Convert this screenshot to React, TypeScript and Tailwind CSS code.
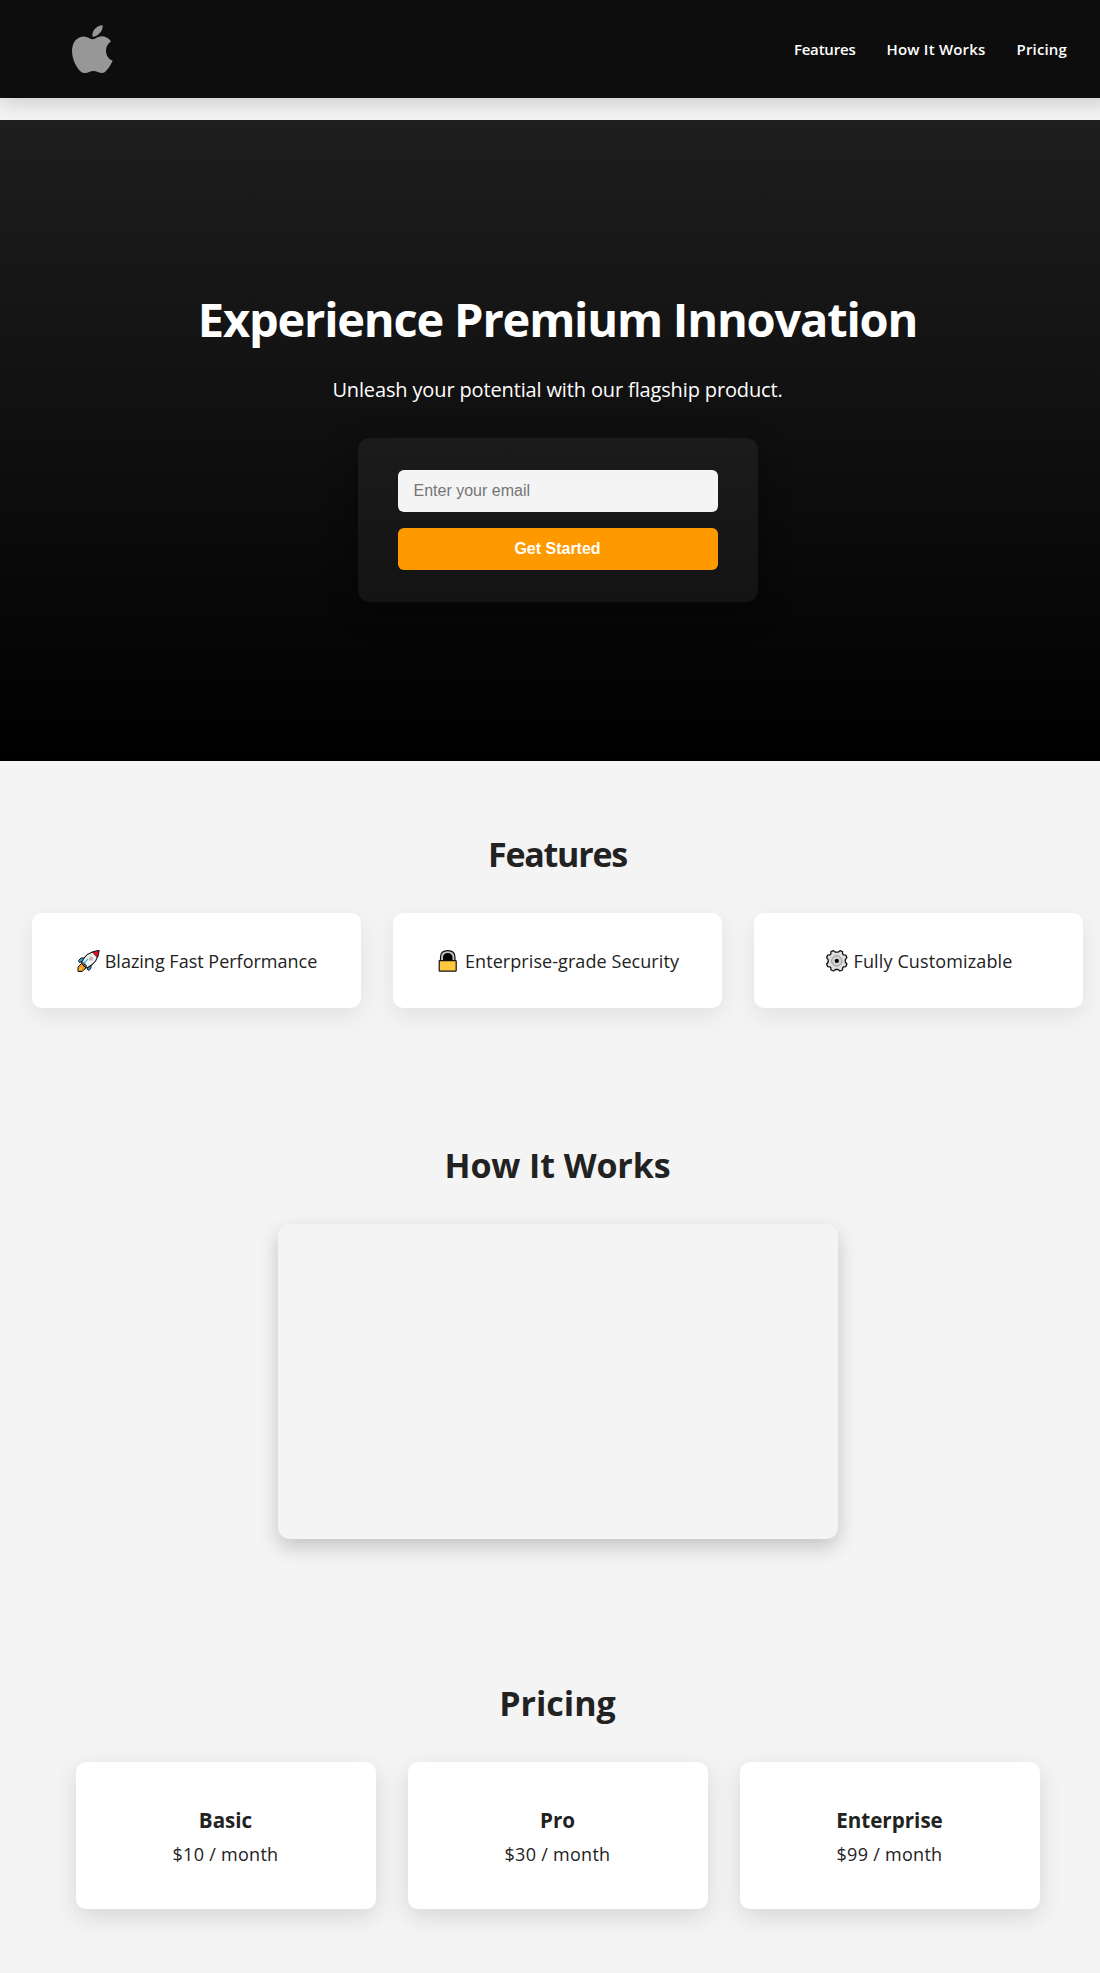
import React from "react";

function AppleLogo() {
  return (
    <svg viewBox="216 74 123 146" className="h-[48.6px] w-[41px]" fill="#979797" aria-label="Logo">
      <path d="M278 117C268 116 262 108 248 109C230 110 216 126 216 152C216 180 233 208 245 216C257 223 268 212 280 212C292 212 303 222 314 216C323 210 334 192 338 181C326 176 318 165 318 151C318 139 324 130 333 123C326 113 314 108 305 108C294 108 287 116 278 117Z" />
      <path d="M278 110C273 93 290 75 308 75C310 91 294 110 278 110Z" />
    </svg>
  );
}

function Rocket() {
  return (
    <svg viewBox="0 0 24 24" className="size-6 shrink-0" strokeLinejoin="round">
      <path d="M3.5 13.5 2.5 11.5 5 9H10L15 14V19L13 21.5 11.5 20.5 12 17 7 12Z" fill="#26a9e0" stroke="#111" strokeWidth="1" />
      <path d="M2 22.5V18L5.5 14.5 10 19 6 22.5Z" fill="#f7941d" stroke="#111" strokeWidth="1" />
      <path d="M3 21.5 4 18 6.5 19.5Z" fill="#ffca3a" />
      <path d="M5.5 13.5C8 7.500 12.500 2.500 23 1.500C22.500 11 17 16 11 19Z" fill="#f2f2f2" stroke="#111" strokeWidth="1.1" />
      <path d="M16.500 3.200C18.500 2.400 20.500 1.800 23 1.500C22.800 4 22 6.500 21 8.300Z" fill="#e81224" stroke="#111" strokeWidth="0.7" />
      <path d="M5.500 14 10.500 19 11 16.500 8 13Z" fill="#555" />
      <path d="M7.500 14.500 12 10" stroke="#35b5e8" strokeWidth="1.100" />
      <circle cx="15" cy="9.700" r="2.100" fill="#b9b9b9" />
    </svg>
  );
}

function Lock() {
  return (
    <svg viewBox="0 0 24 24" className="size-6 shrink-0">
      <path d="M4.500 12V8.500C4.500 4 7.500 1.700 11.700 1.700S19 4 19 8.500V12Z" fill="#c4c4c4" stroke="#111" strokeWidth="1.200" />
      <path d="M7 12V8.500C7 5.700 8.800 4 11.700 4S16.500 5.700 16.500 8.500V12Z" fill="#000" />
      <rect x="3.200" y="11.600" width="17" height="10.500" rx="0.600" fill="#ffc83d" stroke="#111" strokeWidth="1.200" />
    </svg>
  );
}

function Gear() {
  return (
    <svg viewBox="0 0 24 24" className="size-6 shrink-0" strokeLinejoin="round">
      <path
        d="M8.500 1.700 10.500 3.200H13L15 1.700 17.500 2.700 17.700 5 18.500 5.900 20.900 6.200 21.900 8.700 20.300 10.700V13L21.900 15 20.900 17.600 18.500 17.900 17.700 18.800 17.500 21 15 22 13 20.500H10.500L8.500 22 6 21 5.800 18.800 5 17.900 2.600 17.600 1.600 15 3.200 13V10.700L1.600 8.700 2.600 6.200 5 5.900 5.800 5 6 2.700Z"
        fill="#dedede"
        stroke="#111"
        strokeWidth="1.300"
      />
      <circle cx="11.800" cy="11.900" r="5.200" fill="#d2d2d2" stroke="#858585" strokeWidth="0.800" />
      <circle cx="11.800" cy="11.900" r="2.100" fill="#000" />
    </svg>
  );
}

const features = [
  { icon: <Rocket />, text: "Blazing Fast Performance", tracking: "tracking-normal" },
  { icon: <Lock />, text: "Enterprise-grade Security", tracking: "tracking-[0.07px]" },
  { icon: <Gear />, text: "Fully Customizable", tracking: "tracking-[0.13px]" },
];

const plans = [
  { name: "Basic", price: "$10 / month" },
  { name: "Pro", price: "$30 / month" },
  { name: "Enterprise", price: "$99 / month" },
];

const h2 = "text-center text-[34px] leading-[48px] font-bold";

export default function App() {
  return (
    <div className="h-[1973px] w-full overflow-hidden bg-[#f4f4f4] font-['Open_Sans',sans-serif] text-[#222]">
      <div className="w-[1115px]">
        <header className="flex h-[98px] items-center justify-between bg-[#0d0d0d] pr-12 pl-[72px] shadow-[0_4px_20px_rgba(0,0,0,0.18)]">
          <AppleLogo />
          <nav className="flex gap-[31px] pt-px text-[15px] font-semibold text-white">
            <a href="#features" className="tracking-[-0.2px]">Features</a>
            <a href="#how" className="tracking-[0.2px]">How It Works</a>
            <a href="#pricing" className="tracking-[0.15px]">Pricing</a>
          </nav>
        </header>

        <section className="mt-[22px] flex h-[641px] flex-col items-center bg-linear-to-b/srgb from-[#1e1e1e] to-black pt-[167px] text-white">
          <h1 className="text-[47px] leading-[64px] font-bold tracking-[-1.2px]">Experience Premium Innovation</h1>
          <p className="mt-[25px] text-xl leading-7 tracking-[-0.14px]">Unleash your potential with our flagship product.</p>
          <form className="mt-[34px] flex w-[400px] flex-col gap-4 rounded-xl bg-white/5 px-10 py-8 font-['Liberation_Sans',sans-serif] text-base shadow-[0_8px_30px_rgba(0,0,0,0.4)]">
            <input
              type="email"
              placeholder="Enter your email"
              className="h-[42px] rounded-md bg-[#f4f4f4] px-4 placeholder:text-[#757575]"
            />
            <button type="button" className="h-[42px] rounded-md bg-[#ff9900] font-bold text-white">
              Get Started
            </button>
          </form>
        </section>

        <section id="features" className="px-8 pt-[69px]">
          <h2 className={`${h2} tracking-[-1.25px]`}>Features</h2>
          <div className="mt-[35px] grid grid-cols-3 gap-8">
            {features.map((f) => (
              <div
                key={f.text}
                className="flex h-[95px] items-center justify-center gap-[5px] rounded-[10px] bg-white shadow-[0_8px_24px_rgba(0,0,0,0.08)]"
              >
                {f.icon}
                <span className={`text-lg ${f.tracking}`}>{f.text}</span>
              </div>
            ))}
          </div>
        </section>

        <section id="how" className="pt-[133px]">
          <h2 className={`${h2} tracking-[-0.1px]`}>How It Works</h2>
          <div className="mx-auto mt-[35px] h-[315px] w-[560px] rounded-xl bg-[#f4f4f4] shadow-[0_8px_20px_rgba(0,0,0,0.2)]" />
        </section>

        <section id="pricing" className="pt-[140px]">
          <h2 className={h2}>Pricing</h2>
          <div className="mt-[35px] flex justify-center gap-8">
            {plans.map((p) => (
              <div
                key={p.name}
                className="h-[147px] w-[300px] rounded-[10px] bg-white pt-11 text-center shadow-[0_8px_25px_rgba(0,0,0,0.12)]"
              >
                <h3 className="text-[20.6px] leading-7 font-bold">{p.name}</h3>
                <p className="mt-1.5 text-lg leading-7 tracking-[0.28px]">{p.price}</p>
              </div>
            ))}
          </div>
        </section>
      </div>
    </div>
  );
}
